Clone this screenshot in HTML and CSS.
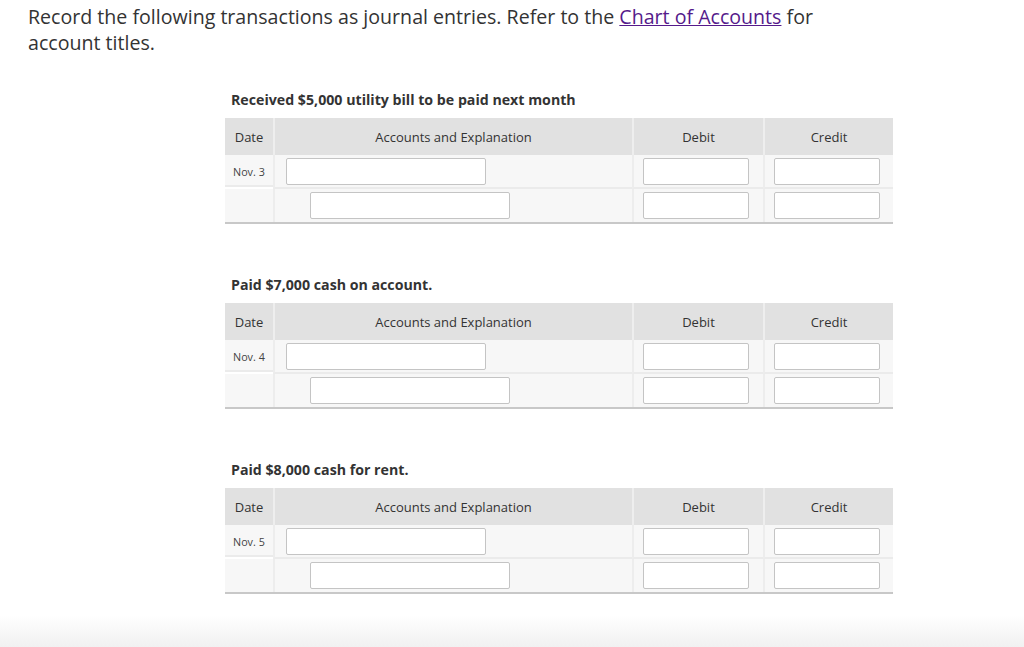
FILE: index.html
```html
<!DOCTYPE html>
<html>
<head>
<meta charset="utf-8">
<link rel="stylesheet" href="styles.css">
</head>
<body>
<div class="page">
  <p class="intro">Record the following transactions as journal entries. Refer to the <a href="#" class="link">Chart of Accounts</a> for account titles.</p>

  <section class="entry">
    <h3 class="caption">Received $5,000 utility bill to be paid next month</h3>
    <div class="jtable">
      <div class="hcell">Date</div>
      <div class="hcell">Accounts and Explanation</div>
      <div class="hcell">Debit</div>
      <div class="hcell">Credit</div>
      <div class="cell date">Nov. 3</div>
      <div class="cell acct"><span class="box wide"></span></div>
      <div class="cell amt"><span class="box"></span></div>
      <div class="cell amt"><span class="box"></span></div>
      <div class="cell date last"></div>
      <div class="cell acct indent last"><span class="box wide"></span></div>
      <div class="cell amt last"><span class="box"></span></div>
      <div class="cell amt last"><span class="box"></span></div>
    </div>
  </section>

  <section class="entry">
    <h3 class="caption">Paid $7,000 cash on account.</h3>
    <div class="jtable">
      <div class="hcell">Date</div>
      <div class="hcell">Accounts and Explanation</div>
      <div class="hcell">Debit</div>
      <div class="hcell">Credit</div>
      <div class="cell date">Nov. 4</div>
      <div class="cell acct"><span class="box wide"></span></div>
      <div class="cell amt"><span class="box"></span></div>
      <div class="cell amt"><span class="box"></span></div>
      <div class="cell date last"></div>
      <div class="cell acct indent last"><span class="box wide"></span></div>
      <div class="cell amt last"><span class="box"></span></div>
      <div class="cell amt last"><span class="box"></span></div>
    </div>
  </section>

  <section class="entry">
    <h3 class="caption">Paid $8,000 cash for rent.</h3>
    <div class="jtable">
      <div class="hcell">Date</div>
      <div class="hcell">Accounts and Explanation</div>
      <div class="hcell">Debit</div>
      <div class="hcell">Credit</div>
      <div class="cell date">Nov. 5</div>
      <div class="cell acct"><span class="box wide"></span></div>
      <div class="cell amt"><span class="box"></span></div>
      <div class="cell amt"><span class="box"></span></div>
      <div class="cell date last"></div>
      <div class="cell acct indent last"><span class="box wide"></span></div>
      <div class="cell amt last"><span class="box"></span></div>
      <div class="cell amt last"><span class="box"></span></div>
    </div>
  </section>
</div>
<div class="fade"></div>
</body>
</html>
```

FILE: styles.css
```css
html, body {
  margin: 0;
  padding: 0;
  background: #ffffff;
}
body {
  font-family: "Open Sans", "DejaVu Sans", sans-serif;
  color: #333333;
  height: 647px;
  overflow: hidden;
  position: relative;
}
.page {
  padding: 4px 0 0 28px;
}
.intro {
  margin: 0;
  width: 800px;
  font-size: 19.6px;
  line-height: 26px;
  color: #333333;
}
.link {
  color: #551a8b;
  text-decoration: underline;
}
.entry {
  margin-left: 197px;
  width: 668px;
}
.entry:first-of-type {
  margin-top: 34px;
}
.entry + .entry {
  margin-top: 51px;
}
.caption {
  margin: 0 0 8px 6px;
  font-size: 14.2px;
  font-weight: 700;
  line-height: 20px;
  color: #333333;
}
.jtable {
  display: grid;
  grid-template-columns: 48px 359px 131px 130px;
  border-right: 1px solid #c4c4c4;
  border-bottom: 2px solid #c8c8c8;
}
.hcell {
  background: #e1e1e1;
  height: 37px;
  display: flex;
  align-items: center;
  justify-content: center;
  font-size: 13px;
  color: #333333;
  border-left: 2px solid #eeeeee;
}
.hcell:first-child {
  border-left: none;
}
.cell {
  background: #f7f7f7;
  height: 32px;
  border-left: 2px solid #ededed;
  border-bottom: 2px solid #ebebeb;
  display: flex;
  align-items: center;
}
.cell.last {
  border-bottom: none;
  height: 33px;
}
.cell.date {
  border-left: none;
  align-items: flex-start;
  padding: 9px 0 0 8px;
  box-sizing: border-box;
  font-size: 10.8px;
  color: #444444;
}
.cell.acct {
  padding-left: 11px;
}
.cell.acct.indent {
  padding-left: 35px;
}
.cell.amt {
  padding-left: 9px;
}
.box {
  display: block;
  width: 104px;
  height: 25px;
  background: #ffffff;
  border: 1px solid #c4c4c4;
  border-radius: 2px;
}
.box.wide {
  width: 198px;
}
.fade {
  position: absolute;
  left: 0;
  right: 0;
  bottom: 0;
  height: 32px;
  background: linear-gradient(#ffffff, #f1f1f1);
}
```
